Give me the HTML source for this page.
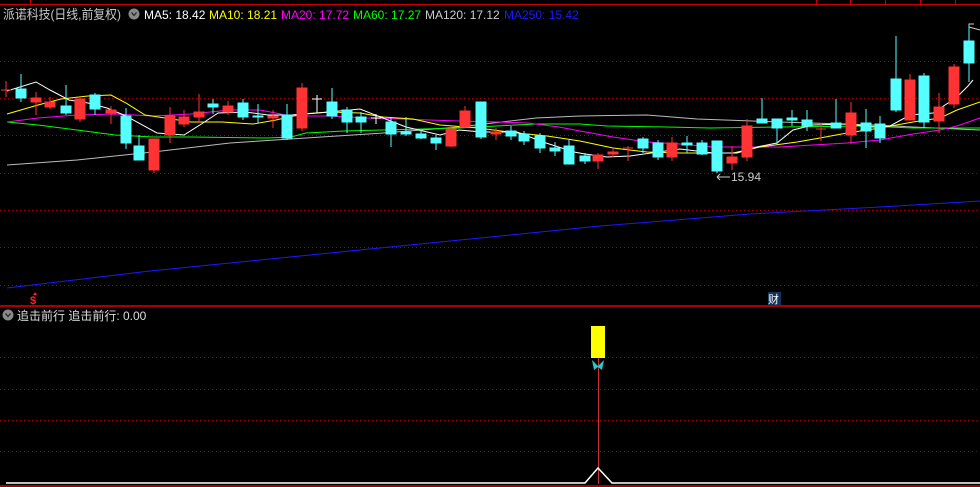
<!DOCTYPE html>
<html><head><meta charset="utf-8"><style>
html,body{margin:0;padding:0;background:#000;width:980px;height:487px;overflow:hidden}
svg{display:block}
text{font-family:"Liberation Sans","Noto Sans CJK SC",sans-serif}
</style></head><body>
<svg width="980" height="487" viewBox="0 0 980 487" xmlns="http://www.w3.org/2000/svg">
<rect width="980" height="487" fill="#000"/>
<line x1="0" y1="4.5" x2="980" y2="4.5" stroke="#c00" stroke-width="1"/>
<g stroke="#c00"><line x1="30.5" y1="0" x2="30.5" y2="4"/><line x1="816.5" y1="0" x2="816.5" y2="4"/><line x1="850.5" y1="0" x2="850.5" y2="4"/><line x1="885.5" y1="0" x2="885.5" y2="4"/><line x1="920.5" y1="0" x2="920.5" y2="4"/><line x1="955.5" y1="0" x2="955.5" y2="4"/></g>
<g stroke="#a00" stroke-width="1" stroke-dasharray="1,3">
<line x1="0" y1="61.5" x2="980" y2="61.5"/><line x1="0" y1="98.5" x2="980" y2="98.5"/><line x1="0" y1="135.5" x2="980" y2="135.5"/><line x1="0" y1="173.5" x2="980" y2="173.5"/><line x1="0" y1="210.5" x2="980" y2="210.5"/><line x1="0" y1="247.5" x2="980" y2="247.5"/><line x1="0" y1="285.5" x2="980" y2="285.5"/>
<line x1="0" y1="357.5" x2="980" y2="357.5"/><line x1="0" y1="389.5" x2="980" y2="389.5"/><line x1="0" y1="420.5" x2="980" y2="420.5"/><line x1="0" y1="451.5" x2="980" y2="451.5"/>
</g>
<line x1="0" y1="306" x2="980" y2="306" stroke="#d00" stroke-width="1.5"/>
<line x1="0" y1="486" x2="980" y2="486" stroke="#d00" stroke-width="1.5"/>
<text x="3" y="19" font-size="13" fill="#c8c8c8" textLength="118" lengthAdjust="spacingAndGlyphs">派诺科技(日线,前复权)</text>
<circle cx="134" cy="14" r="5.5" fill="#888"/><path d="M131.5 12.5 L134 15.5 L136.5 12.5" stroke="#222" fill="none" stroke-width="1.2"/>
<text x="144" y="19" font-size="12" fill="#fff">MA5: 18.42</text>
<text x="209" y="19" font-size="12" fill="#ff0">MA10: 18.21</text>
<text x="281" y="19" font-size="12" fill="#f0f">MA20: 17.72</text>
<text x="353" y="19" font-size="12" fill="#0f0">MA60: 17.27</text>
<text x="425" y="19" font-size="12" fill="#ccc">MA120: 17.12</text>
<text x="504" y="19" font-size="12" fill="#1a1aff">MA250: 15.42</text>
<polyline fill="none" stroke="#1a1aff" stroke-width="1" points="7,288 150,271 300,256 450,241 600,226 750,214 880,207 980,201"/>
<polyline fill="none" stroke="#bbb" stroke-width="1" points="7,165 77,160 153,152 230,143 306,138 383,133 459,127 536,118 580,116 647,115 697,119 780,122 873,125 913,127 980,130"/>
<polyline fill="none" stroke="#0f0" stroke-width="1" points="7,122 38,125 77,130 115,135 153,137 191,137 268,138 291,137 306,133 344,131 383,130 421,129 459,128 497,126 536,124 580,124 607,126 667,127 710,128 780,127 867,126 913,128 980,128"/>
<polyline fill="none" stroke="#f0f" stroke-width="1" points="7,122 38,118 77,115 115,114 153,116 191,114 230,110 260,110 291,116 329,116 367,118 402,119 429,120 459,121 497,122 528,123 559,127 580,131 613,137 647,142 680,144 713,147 780,147 813,145 847,143 880,140 913,134 940,130 957,126 980,118"/>
<polyline fill="none" stroke="#ff0" stroke-width="1" points="7,114 38,105 61,99 88,96 111,95 126,103 145,115 165,118 191,122 222,122 253,124 276,120 302,114 329,112 360,113 383,117 413,119 440,125 478,128 517,133 547,136 580,141 613,148 647,152 680,153 733,153 760,147 797,142 820,138 847,133 880,128 913,122 940,118 957,110 980,102"/>
<polyline fill="none" stroke="#fff" stroke-width="1" points="7,91 36,82 50,90 69,100 88,103 107,108 126,116 157,133 184,135 203,123 218,113 245,112 268,115 291,115 318,113 360,109 383,118 406,127 440,135 459,130 482,132 517,132 543,142 574,152 585,154 607,157 630,156 680,149 713,153 737,153 757,147 777,143 793,130 813,125 847,124 873,127 890,126 910,115 933,113 957,97 968,86 973,80"/>
<g stroke="#5ff" fill="#5ff" stroke-width="1">
<line x1="21" y1="74" x2="21" y2="102"/><rect x="16" y="89" width="10" height="9"/>
<line x1="66" y1="85" x2="66" y2="115"/><rect x="61" y="106" width="10" height="7"/>
<line x1="95" y1="93" x2="95" y2="115"/><rect x="90" y="95" width="10" height="14"/>
<line x1="126" y1="108" x2="126" y2="149"/><rect x="121" y="116" width="10" height="27"/>
<line x1="139" y1="135" x2="139" y2="160"/><rect x="134" y="146" width="10" height="14"/>
<line x1="213" y1="99" x2="213" y2="114"/><rect x="208" y="104" width="10" height="3"/>
<line x1="243" y1="99" x2="243" y2="120"/><rect x="238" y="103" width="10" height="14"/>
<line x1="258" y1="104" x2="258" y2="123"/><rect x="253" y="116" width="10" height="1"/>
<line x1="287" y1="104" x2="287" y2="140"/><rect x="282" y="115" width="10" height="23"/>
<line x1="332" y1="88" x2="332" y2="119"/><rect x="327" y="102" width="10" height="14"/>
<line x1="347" y1="107" x2="347" y2="133"/><rect x="342" y="110" width="10" height="12"/>
<line x1="361" y1="112" x2="361" y2="133"/><rect x="356" y="117" width="10" height="5"/>
<line x1="391" y1="118" x2="391" y2="147"/><rect x="386" y="122" width="10" height="12"/>
<line x1="406" y1="117" x2="406" y2="136"/><rect x="401" y="132" width="10" height="2"/>
<line x1="421" y1="130" x2="421" y2="139"/><rect x="416" y="134" width="10" height="4"/>
<line x1="436" y1="135" x2="436" y2="150"/><rect x="431" y="138" width="10" height="5"/>
<line x1="481" y1="102" x2="481" y2="139"/><rect x="476" y="102" width="10" height="35"/>
<line x1="511" y1="126" x2="511" y2="140"/><rect x="506" y="131" width="10" height="5"/>
<line x1="524" y1="131" x2="524" y2="145"/><rect x="519" y="134" width="10" height="7"/>
<line x1="540" y1="133" x2="540" y2="153"/><rect x="535" y="136" width="10" height="12"/>
<line x1="555" y1="142" x2="555" y2="156"/><rect x="550" y="148" width="10" height="3"/>
<line x1="569" y1="140" x2="569" y2="164"/><rect x="564" y="146" width="10" height="18"/>
<line x1="585" y1="153" x2="585" y2="164"/><rect x="580" y="156" width="10" height="5"/>
<line x1="643" y1="137" x2="643" y2="153"/><rect x="638" y="139" width="10" height="9"/>
<line x1="658" y1="140" x2="658" y2="160"/><rect x="653" y="143" width="10" height="14"/>
<line x1="687" y1="136" x2="687" y2="153"/><rect x="682" y="143" width="10" height="2"/>
<line x1="702" y1="140" x2="702" y2="155"/><rect x="697" y="143" width="10" height="11"/>
<line x1="717" y1="141" x2="717" y2="173"/><rect x="712" y="141" width="10" height="30"/>
<line x1="762" y1="98" x2="762" y2="123"/><rect x="757" y="119" width="10" height="4"/>
<line x1="777" y1="119" x2="777" y2="145"/><rect x="772" y="119" width="10" height="9"/>
<line x1="792" y1="110" x2="792" y2="126"/><rect x="787" y="118" width="10" height="2"/>
<line x1="807" y1="110" x2="807" y2="131"/><rect x="802" y="120" width="10" height="6"/>
<line x1="836" y1="99" x2="836" y2="128"/><rect x="831" y="123" width="10" height="5"/>
<line x1="866" y1="109" x2="866" y2="148"/><rect x="861" y="123" width="10" height="8"/>
<line x1="880" y1="116" x2="880" y2="143"/><rect x="875" y="124" width="10" height="14"/>
<line x1="896" y1="36" x2="896" y2="112"/><rect x="891" y="79" width="10" height="31"/>
<line x1="924" y1="73" x2="924" y2="128"/><rect x="919" y="76" width="10" height="46"/>
<line x1="969" y1="24" x2="969" y2="82"/><rect x="964" y="41" width="10" height="22"/>
</g>
<g stroke="#f33" fill="#f33" stroke-width="1">
<line x1="6" y1="81" x2="6" y2="97"/><line x1="1" y1="90" x2="11" y2="90"/>
<line x1="36" y1="92" x2="36" y2="115"/><rect x="31" y="98" width="10" height="4"/>
<line x1="50" y1="97" x2="50" y2="109"/><rect x="45" y="102" width="10" height="5"/>
<line x1="80" y1="98" x2="80" y2="122"/><rect x="75" y="99" width="10" height="20"/>
<line x1="111" y1="106" x2="111" y2="124"/><rect x="106" y="110" width="10" height="3"/>
<line x1="154" y1="139" x2="154" y2="173"/><rect x="149" y="139" width="10" height="31"/>
<line x1="170" y1="107" x2="170" y2="143"/><rect x="165" y="116" width="10" height="19"/>
<line x1="184" y1="110" x2="184" y2="127"/><rect x="179" y="117" width="10" height="7"/>
<line x1="199" y1="94" x2="199" y2="123"/><rect x="194" y="112" width="10" height="5"/>
<line x1="228" y1="101" x2="228" y2="115"/><rect x="223" y="106" width="10" height="6"/>
<line x1="273" y1="110" x2="273" y2="128"/><rect x="268" y="116" width="10" height="2"/>
<line x1="302" y1="83" x2="302" y2="131"/><rect x="297" y="88" width="10" height="40"/>
<line x1="451" y1="126" x2="451" y2="147"/><rect x="446" y="129" width="10" height="17"/>
<line x1="465" y1="106" x2="465" y2="128"/><rect x="460" y="111" width="10" height="16"/>
<line x1="496" y1="128" x2="496" y2="140"/><rect x="491" y="132" width="10" height="2"/>
<line x1="598" y1="153" x2="598" y2="169"/><rect x="593" y="155" width="10" height="6"/>
<line x1="613" y1="148" x2="613" y2="157"/><rect x="608" y="152" width="10" height="2"/>
<line x1="628" y1="146" x2="628" y2="161"/><line x1="623" y1="148" x2="633" y2="148"/>
<line x1="672" y1="137" x2="672" y2="161"/><rect x="667" y="143" width="10" height="14"/>
<line x1="732" y1="146" x2="732" y2="170"/><rect x="727" y="157" width="10" height="6"/>
<line x1="747" y1="119" x2="747" y2="161"/><rect x="742" y="126" width="10" height="31"/>
<line x1="821" y1="123" x2="821" y2="141"/><line x1="816" y1="129" x2="826" y2="129"/>
<line x1="851" y1="102" x2="851" y2="144"/><rect x="846" y="113" width="10" height="22"/>
<line x1="910" y1="74" x2="910" y2="120"/><rect x="905" y="80" width="10" height="40"/>
<line x1="939" y1="93" x2="939" y2="133"/><rect x="934" y="107" width="10" height="14"/>
<line x1="954" y1="64" x2="954" y2="108"/><rect x="949" y="67" width="10" height="37"/>
</g>
<g stroke="#fff" stroke-width="1">
<line x1="317" y1="95" x2="317" y2="113"/><line x1="312" y1="99" x2="322" y2="99"/>
<line x1="376" y1="114" x2="376" y2="124"/><line x1="371" y1="118" x2="381" y2="118"/>
</g>
<path d="M969 26 V24 H974 M969 27 L980 30" stroke="#ccc" fill="none"/>
<text x="731" y="181" font-size="12" fill="#ccc" textLength="30" lengthAdjust="spacingAndGlyphs">15.94</text>
<path d="M717 177 H730 M717 177 L720 174 M717 177 L720 180" stroke="#ccc" fill="none"/>
<text x="30" y="304" font-size="11" fill="#f22" font-weight="bold">$</text>
<path d="M33 295 L35 292 L37 295 Z" fill="#f22"/>
<rect x="768" y="292" width="13" height="13" fill="#13335a"/>
<text x="768" y="303" font-size="11" fill="#fff">财</text>
<circle cx="8" cy="315" r="5.5" fill="#888"/><path d="M5.5 313.5 L8 316.5 L10.5 313.5" stroke="#222" fill="none" stroke-width="1.2"/>
<text x="17" y="320" font-size="12" fill="#ddd">追击前行 追击前行: 0.00</text>
<line x1="598.5" y1="358" x2="598.5" y2="484" stroke="#c33" stroke-width="1"/>
<rect x="591" y="326" width="14" height="32" fill="#ff0"/>
<path d="M592 360 L598 366 L604 360 L602 370 L598 367 L594 370 Z" fill="#2cc" />
<polyline fill="none" stroke="#fff" stroke-width="1.5" points="6,483 585,483 598,468 612,483 980,483"/>
</svg>
</body></html>
